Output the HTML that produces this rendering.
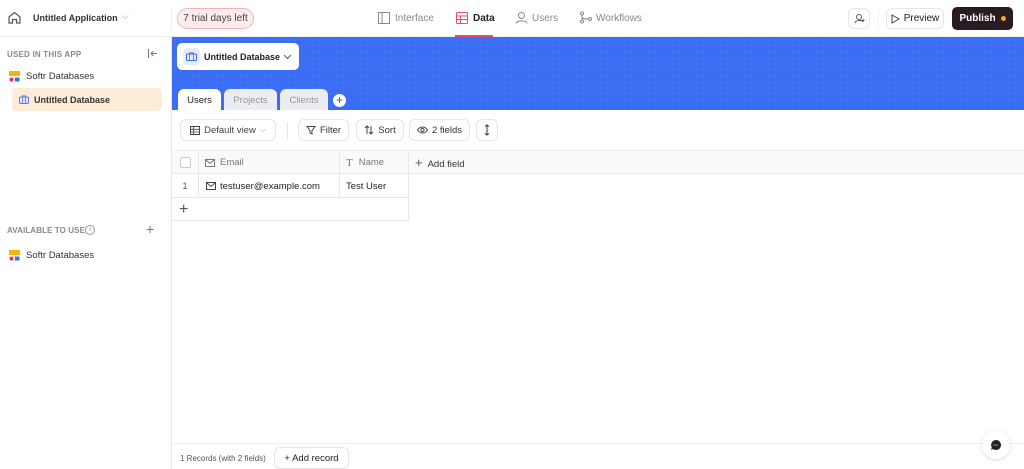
<!DOCTYPE html>
<html><head><meta charset="utf-8"><style>
*{box-sizing:border-box;margin:0;padding:0}
body{width:1024px;height:469px;overflow:hidden;background:#fff;font-family:"Liberation Sans",sans-serif;color:#222;position:relative;font-size:9.5px}
.a{position:absolute}
.top{left:0;top:0;width:1024px;height:37px;border-bottom:1px solid #eee;background:#fff}
.side{left:0;top:37px;width:172px;height:432px;border-right:1px solid #e8e8e8}
.blue{left:172px;top:37px;width:852px;height:73px;background:#3a6cf4;background-image:radial-gradient(rgba(255,255,255,.18) 0.6px,transparent 0.8px);background-size:6px 6px}
.btn{border:1px solid #e5e5e5;border-radius:6px;background:#fff;display:flex;align-items:center;justify-content:center;gap:4px;font-size:9.5px;color:#333}
.tab{top:89px;height:21px;border-radius:6px 6px 0 0;display:flex;align-items:center;justify-content:center;font-size:9.5px;padding-top:2px}
.cell{position:absolute;border-right:1px solid #e8e8e8;border-bottom:1px solid #e8e8e8;display:flex;align-items:center;font-size:9.5px;padding-top:1px}
svg{display:block}
</style></head><body>
<div class="a top"></div>
<svg class="a" style="left:7px;top:10px" width="15" height="15" viewBox="0 0 15 15"><path d="M2 7L7.5 2.5 13 7V13H9.5V9.5H5.5V13H2Z" fill="none" stroke="#555" stroke-width="1.2"/></svg>
<div class="a" style="left:33px;top:13px;font-size:9px;font-weight:bold;color:#333">Untitled Application</div>
<div class="a" style="left:122px;top:11px;color:#888;font-size:9px">⌵</div>
<div class="a" style="left:171px;top:8px;width:1px;height:22px;background:#eee"></div>
<div class="a" style="left:177px;top:8px;width:77px;height:21px;border:1px solid #f2b3b8;background:#fdeced;border-radius:11px;font-size:10px;color:#444;display:flex;align-items:center;justify-content:center">7 trial days left</div>
<svg class="a" style="left:378px;top:12px" width="12" height="12"><rect x=".5" y=".5" width="11" height="11" fill="none" stroke="#888"/><line x1="4" y1="1" x2="4" y2="11" stroke="#888"/></svg>
<div class="a" style="left:395px;top:13px;color:#888;font-size:10px">Interface</div>
<svg class="a" style="left:456px;top:12px" width="12" height="12"><rect x=".5" y=".5" width="11" height="11" fill="none" stroke="#e0506a" rx="1"/><line x1="1" y1="4" x2="11" y2="4" stroke="#e0506a"/><line x1="1" y1="7.5" x2="11" y2="7.5" stroke="#e0506a"/><line x1="4.5" y1="4" x2="4.5" y2="11" stroke="#e0506a"/></svg>
<div class="a" style="left:473px;top:13px;font-weight:bold;font-size:10px;color:#222">Data</div>
<div class="a" style="left:455px;top:35px;width:38px;height:2px;background:#e0506a"></div>
<svg class="a" style="left:515px;top:11px" width="13" height="13"><circle cx="6.5" cy="4.5" r="3" fill="none" stroke="#888"/><path d="M1 12.5C1.5 9 11.5 9 12 12.5" fill="none" stroke="#888"/></svg>
<div class="a" style="left:532px;top:13px;color:#888;font-size:10px">Users</div>
<svg class="a" style="left:579px;top:11px" width="14" height="13"><circle cx="3" cy="2.5" r="1.5" fill="none" stroke="#888"/><circle cx="3" cy="10.5" r="1.5" fill="none" stroke="#888"/><circle cx="11" cy="8" r="1.5" fill="none" stroke="#888"/><path d="M3 4V9M3 6C3 8 6 8 9.5 8" fill="none" stroke="#888"/></svg>
<div class="a" style="left:596px;top:13px;color:#888;font-size:10px">Workflows</div>
<div class="a btn" style="left:848px;top:8px;width:22px;height:21px"><svg width="11" height="11"><circle cx="5" cy="4" r="2.5" fill="none" stroke="#555"/><path d="M1 10C1.5 7 8 7 8.5 8.5M9 6v3M7.5 7.5h3" fill="none" stroke="#555"/></svg></div>
<div class="a" style="left:878px;top:9px;width:1px;height:20px;background:#eee"></div>
<div class="a btn" style="left:886px;top:8px;width:58px;height:21px;font-size:10px;color:#222"><svg width="9" height="10"><path d="M1 1L8 5 1 9Z" fill="none" stroke="#444"/></svg>Preview</div>
<div class="a" style="left:952px;top:7px;width:61px;height:23px;background:#2a1a24;border-radius:5px;color:#fff;font-weight:bold;font-size:10px;display:flex;align-items:center;justify-content:center;gap:5px">Publish<span style="width:5px;height:5px;border-radius:50%;background:#f5a623;display:inline-block"></span></div>

<div class="a side"></div>
<div class="a" style="left:7px;top:50px;font-size:8px;font-weight:bold;color:#888;letter-spacing:.2px">USED IN THIS APP</div>
<svg class="a" style="left:147px;top:48px" width="11" height="11"><path d="M1.5 1v9M10 5.5H4M6.5 3L4 5.5 6.5 8" fill="none" stroke="#777"/></svg>
<svg class="a" style="left:9px;top:71px" width="11" height="11"><rect x="0" y="0" width="11" height="5" fill="#fbb200"/><circle cx="2.5" cy="8.5" r="2" fill="#f2295b"/><rect x="6" y="6.5" width="4.5" height="4" fill="#3a6cf4"/></svg>
<div class="a" style="left:26px;top:71px;font-size:9.5px;color:#333">Softr Databases</div>
<div class="a" style="left:12px;top:88px;width:150px;height:23px;background:#fdecd7;border-radius:4px"></div>
<svg class="a" style="left:19px;top:95px" width="10" height="9"><rect x=".5" y="2" width="9" height="6.5" rx="1" fill="#dfe5fb" stroke="#5a7ce8"/><path d="M3.5 2V.8h3V2M3.5 2v6.5M6.5 2v6.5" fill="none" stroke="#5a7ce8" stroke-width=".8"/></svg>
<div class="a" style="left:34px;top:95px;font-size:9px;font-weight:bold;color:#333">Untitled Database</div>
<div class="a" style="left:7px;top:226px;font-size:8px;font-weight:bold;color:#888;letter-spacing:.1px">AVAILABLE TO USE</div>
<div class="a" style="left:85px;top:225px;width:10px;height:10px;border:1px solid #999;border-radius:50%;font-size:7px;color:#888;text-align:center;line-height:8px">i</div>
<div class="a" style="left:146px;top:221px;font-size:14px;color:#777">+</div>
<svg class="a" style="left:9px;top:250px" width="11" height="11"><rect x="0" y="0" width="11" height="5" fill="#fbb200"/><circle cx="2.5" cy="8.5" r="2" fill="#f2295b"/><rect x="6" y="6.5" width="4.5" height="4" fill="#3a6cf4"/></svg>
<div class="a" style="left:26px;top:250px;font-size:9.5px;color:#333">Softr Databases</div>

<div class="a blue"></div>
<div class="a" style="left:177px;top:43px;width:122px;height:27px;background:#fff;border-radius:5px"></div>
<div class="a" style="left:183px;top:48px;width:17px;height:17px;background:#e6ebfd;border-radius:4px"></div>
<svg class="a" style="left:186px;top:52px" width="11" height="9"><rect x=".5" y="2" width="10" height="6.5" rx="1" fill="none" stroke="#3a6cf4"/><path d="M3.5 2V.8h4V2M3.5 2v6.5M7.5 2v6.5" fill="none" stroke="#3a6cf4" stroke-width=".8"/></svg>
<div class="a" style="left:204px;top:52px;font-size:9px;font-weight:bold;color:#222">Untitled Database</div>
<svg class="a" style="left:283px;top:54px" width="9" height="6"><path d="M1 1l3.5 3.5L8 1" fill="none" stroke="#555"/></svg>
<div class="a tab" style="left:178px;width:43px;background:#fff;color:#222">Users</div>
<div class="a tab" style="left:224px;width:53px;background:#ececf3;color:#999">Projects</div>
<div class="a tab" style="left:280px;width:48px;background:#ececf3;color:#999">Clients</div>
<div class="a" style="left:333px;top:94px;width:13px;height:13px;border-radius:50%;background:#fff;color:#555;font-size:12px;line-height:13px;text-align:center">+</div>

<div class="a btn" style="left:180px;top:119px;width:96px;height:22px;color:#444"><svg width="10" height="9"><rect x=".5" y=".5" width="9" height="8" fill="none" stroke="#444"/><path d="M1 3.3h8M1 6h8M3.5 1v8" stroke="#444" stroke-width=".8"/></svg>Default view <span style="color:#999;font-size:8px">⌵</span></div>
<div class="a" style="left:287px;top:122px;width:1px;height:17px;background:#e5e5e5"></div>
<div class="a btn" style="left:298px;top:119px;width:51px;height:22px"><svg width="10" height="10"><path d="M1 1.5h8L6 5.5V9L4 8V5.5Z" fill="none" stroke="#444"/></svg>Filter</div>
<div class="a btn" style="left:356px;top:119px;width:48px;height:22px"><svg width="10" height="10"><path d="M3 9V1M1 3l2-2 2 2M7 1v8M5 7l2 2 2-2" fill="none" stroke="#444"/></svg>Sort</div>
<div class="a btn" style="left:409px;top:119px;width:61px;height:22px"><svg width="11" height="8"><path d="M.5 4C3 0 8 0 10.5 4 8 8 3 8 .5 4Z" fill="none" stroke="#444"/><circle cx="5.5" cy="4" r="1.6" fill="none" stroke="#444"/></svg>2 fields</div>
<div class="a btn" style="left:476px;top:119px;width:22px;height:22px"><svg width="6" height="12"><path d="M3 1v10M1 2.5L3 1l2 1.5M1 9.5L3 11l2-1.5" fill="none" stroke="#333"/></svg></div>

<div class="a" style="left:172px;top:150px;width:852px;height:24px;background:#fafafa;border-top:1px solid #eee;border-bottom:1px solid #e8e8e8"></div>
<div class="cell" style="left:172px;top:150px;width:27px;height:24px;justify-content:center"><span style="width:11px;height:11px;border:1px solid #ccc;border-radius:2px;background:#fff"></span></div>
<div class="cell" style="left:199px;top:150px;width:141px;height:24px;padding-left:6px;color:#777;gap:5px;padding-top:2px"><svg width="10" height="8"><rect x=".5" y=".5" width="9" height="7" fill="none" stroke="#777"/><path d="M.5 .5l4.5 4 4.5-4" fill="none" stroke="#777"/></svg>Email</div>
<div class="cell" style="left:340px;top:150px;width:69px;height:24px;padding-left:6px;color:#777;gap:6px;padding-top:2px"><span style="font-family:'Liberation Serif',serif;font-size:11px">T</span>Name</div>
<div class="a" style="left:415px;top:155px;font-size:9.5px;color:#333"><span style="font-size:13px;color:#555;margin-right:5px">+</span>Add field</div>
<div class="cell" style="left:172px;top:174px;width:27px;height:24px;justify-content:center;font-size:9px;color:#555">1</div>
<div class="cell" style="left:199px;top:174px;width:141px;height:24px;padding-left:7px;gap:4px;color:#222"><svg width="10" height="8"><rect x=".5" y=".5" width="9" height="7" fill="none" stroke="#444"/><path d="M.5 .5l4.5 4 4.5-4" fill="none" stroke="#444"/></svg>testuser@example.com</div>
<div class="cell" style="left:340px;top:174px;width:69px;height:24px;padding-left:6px;color:#222">Test User</div>
<div class="cell" style="left:172px;top:198px;width:237px;height:23px;padding-left:7px;font-size:16px;color:#555;font-weight:300">+</div>

<div class="a" style="left:172px;top:443px;width:852px;height:1px;background:#eee"></div>
<div class="a" style="left:180px;top:454px;font-size:8px;color:#555">1 Records (with 2 fields)</div>
<div class="a btn" style="left:274px;top:447px;width:75px;height:22px;color:#222">+ Add record</div>
<div class="a" style="left:982px;top:431px;width:28px;height:28px;border-radius:50%;background:#fff;box-shadow:0 1px 4px rgba(0,0,0,.15)"></div>
<svg class="a" style="left:990px;top:439px" width="12" height="12"><path d="M6 1a5 5 0 1 1-3 9L1 11l.8-2.5A5 5 0 0 1 6 1Z" fill="#222"/><path d="M3.5 6h5" stroke="#fff" stroke-width=".8" stroke-dasharray="1 .6"/></svg>
</body></html>
